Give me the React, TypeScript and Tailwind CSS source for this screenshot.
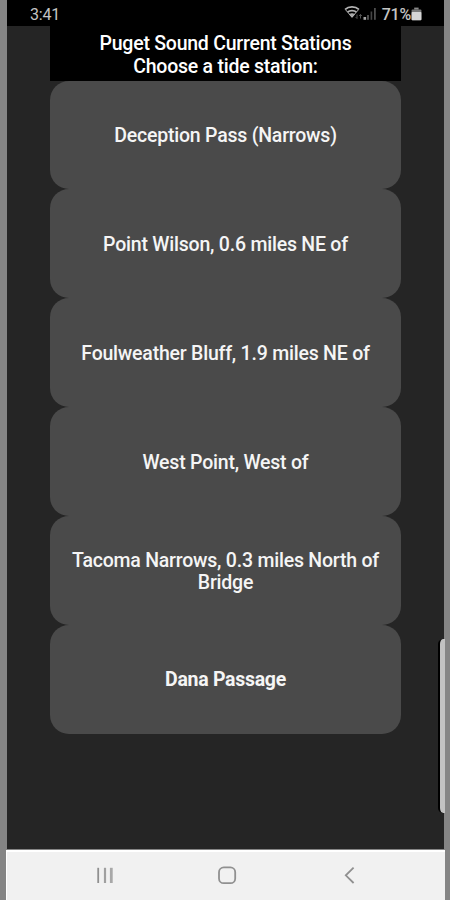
const STATIONS = [
  'Deception Pass (Narrows)',
  'Point Wilson, 0.6 miles NE of',
  'Foulweather Bluff, 1.9 miles NE of',
  'West Point, West of',
  'Tacoma Narrows, 0.3 miles North of Bridge',
  'Dana Passage',
];

const WifiIcon = () => (
  <svg width="20" height="16" viewBox="0 0 20 16" fill="none" stroke="#b4b4b4">
    <path d="M1.2 4.4C4.6 1 11.4 1 14.8 4.4" strokeWidth="1.8" />
    <path d="M3.6 7C6 5.2 10 5.2 12.4 7" strokeWidth="1.7" />
    <path d="M1.2 4.4L8 12L14.8 4.4" strokeWidth="1" />
    <path d="M5.4 9.4C6.8 8.4 9.2 8.4 10.6 9.4L8 12.4Z" fill="#a8a8a8" strokeWidth="0.8" />
    <path d="M13 9.5v4m-1.3-1.3l1.3 1.3M16.5 13.5v-4m-1.5 1.4l1.5-1.4l1.4 1.4" stroke="#5c5c5c" strokeWidth="0.9" />
  </svg>
);

const SignalIcon = () => (
  <svg width="14" height="14" viewBox="0 0 14 14">
    <rect x="0.5" y="10" width="2.6" height="2.8" fill="#a5a5a5" />
    <rect x="4.2" y="8" width="1.6" height="4.8" fill="#606060" />
    <rect x="7.6" y="4.5" width="1.6" height="8.3" fill="#454545" />
    <rect x="11" y="1" width="1.8" height="11.8" fill="#4d4d4d" />
  </svg>
);

const BatteryIcon = () => (
  <svg width="11" height="14" viewBox="0 0 11 14">
    <rect x="3.2" y="0.6" width="4.4" height="2" fill="#8a8a8a" />
    <rect x="0.6" y="2.4" width="9.8" height="10.8" rx="1" fill="#7a7a7a" />
    <rect x="0.6" y="5" width="9.8" height="8.2" rx="0.8" fill="#d6d6d6" />
  </svg>
);

const StatusBar = () => (
  <div className="h-[26px] shrink-0 bg-black flex items-start justify-between pl-[23px] pr-[22px] pt-[5px] text-[#c4c4c4]">
    <span className="text-[16px] leading-[19px] tracking-[-0.2px]">3:41</span>
    <div className="flex items-start">
      <WifiIcon />
      <div className="-ml-px pt-[2px]">
        <SignalIcon />
      </div>
      <span className="ml-[5px] text-[16px] leading-[19px] font-medium tracking-[-0.2px]">71%</span>
      <div className="pt-[2px]">
        <BatteryIcon />
      </div>
    </div>
  </div>
);

const StationButton = ({ label }: { label: string }) => (
  <button
    type="button"
    className="h-[108.9px] w-full shrink-0 rounded-[19px] bg-[#4a4a4a] px-4 pt-[2px] text-[19.5px] leading-[22px] font-medium tracking-[-0.22px] text-[#f5f5f5] last:font-bold last:tracking-[-0.3px]"
  >
    {label}
  </button>
);

const NavBar = () => (
  <div className="h-[51px] shrink-0 -mx-px border-t border-[#858585] bg-[#f1f1f1]">
    <div className="h-[50px] border-t-2 border-l border-white">
      <svg width="438" height="48" viewBox="0 0 438 48" fill="none" stroke="#909090" strokeWidth="1.8">
        <path d="M91.2 15.8v15.2" />
        <path d="M98 15.8v15.2" stroke="#a0a0a0" strokeWidth="2.2" />
        <path d="M104.3 15.8v15.2" stroke="#a8a8a8" strokeWidth="2.8" />
        <rect x="212" y="15.4" width="16.2" height="15.8" rx="4.8" />
        <path d="M346.6 15.6L338.8 23.3L346.6 31" />
      </svg>
    </div>
  </div>
);

const App = () => {
  return (
    <div className="relative h-[900px] w-[450px] overflow-hidden bg-[#858585] pl-[7px] pr-[6px] font-[Roboto,sans-serif]">
      <div className="flex h-full flex-col bg-[#252525]">
        <StatusBar />
        <main className="flex min-h-0 flex-1 flex-col pl-[43px] pr-[43px]">
          <h1 className="h-[54.5px] shrink-0 bg-black pt-[7px] text-center text-[19.5px] leading-[22.5px] font-medium tracking-[-0.24px] text-white">
            Puget Sound Current Stations
            <br />
            Choose a tide station:
          </h1>
          {STATIONS.map((station) => (
            <StationButton key={station} label={station} />
          ))}
        </main>
        <NavBar />
      </div>

      {/* Edge panel handle */}
      <div className="absolute right-[5px] top-[639px] h-[174px] w-[7px] rounded-l-[5px] border-l-2 border-black bg-[#c2c2c2]" />
    </div>
  );
};

export default App;
